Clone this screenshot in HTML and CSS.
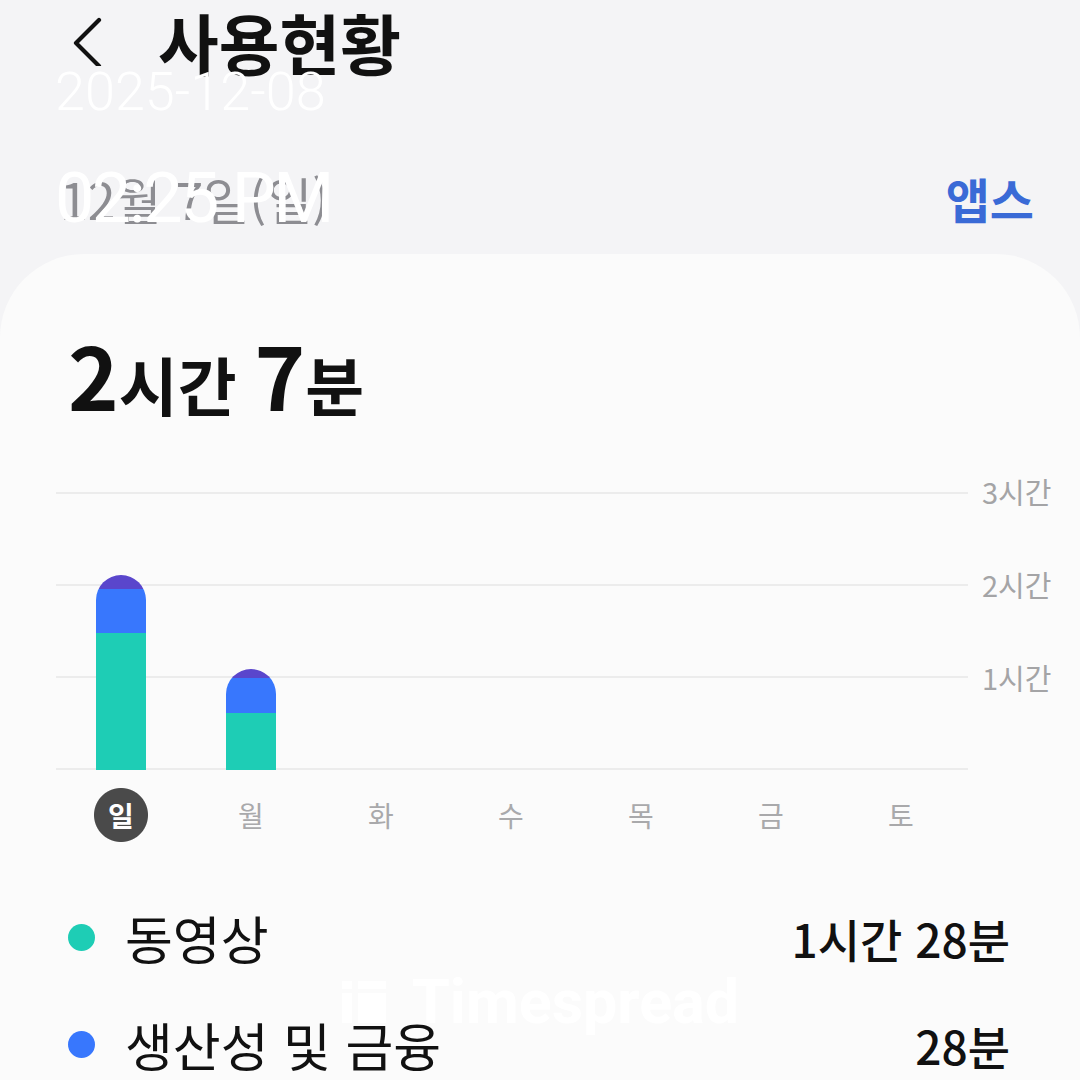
FILE: index.html
```html
<!DOCTYPE html>
<html lang="ko">
<head>
<meta charset="utf-8">
<title>사용현황</title>
<link rel="stylesheet" href="styles.css">
</head>
<body>
<div class="screen">
  <header class="topbar">
    <svg class="back" width="34" height="50" viewBox="0 0 34 50"><path d="M27 4 L4 27 L27 50" fill="none" stroke="#111" stroke-width="4.2" stroke-linecap="round" stroke-linejoin="round"/></svg>
    <h1 class="title">사용현황</h1>
  </header>
  <div class="daterow">
    <span class="date">12월 7일(일)</span>
    <span class="apps">앱스</span>
  </div>

  <section class="card">
    <div class="total"><span class="num">2</span>시간 <span class="num">7</span>분</div>

    <div class="chart">
      <div class="plot">
        <div class="grid">
          <div class="gline"></div>
          <div class="gline"></div>
          <div class="gline"></div>
        </div>
        <div class="bars">
          <div class="col">
            <div class="bar">
              <div class="seg purple" style="height:14px"></div>
              <div class="seg blue" style="height:44px"></div>
              <div class="seg teal" style="height:137px"></div>
            </div>
          </div>
          <div class="col">
            <div class="bar">
              <div class="seg purple" style="height:9px"></div>
              <div class="seg blue" style="height:35px"></div>
              <div class="seg teal" style="height:57px"></div>
            </div>
          </div>
          <div class="col"></div>
          <div class="col"></div>
          <div class="col"></div>
          <div class="col"></div>
          <div class="col"></div>
        </div>
      </div>
      <div class="axis">
        <span>3시간</span>
        <span>2시간</span>
        <span>1시간</span>
      </div>
    </div>

    <div class="days">
      <span class="day sel">일</span>
      <span class="day">월</span>
      <span class="day">화</span>
      <span class="day">수</span>
      <span class="day">목</span>
      <span class="day">금</span>
      <span class="day">토</span>
    </div>

    <ul class="legend">
      <li class="row"><span class="dot teal"></span><span class="name">동영상</span><span class="val">1시간 28분</span></li>
      <li class="row"><span class="dot blue"></span><span class="name">생산성 및 금융</span><span class="val">28분</span></li>
    </ul>
  </section>

  <div class="stamp">
    <div class="stamp-date">2025-12-08</div>
    <div class="stamp-time">02:25 PM</div>
  </div>

  <div class="watermark">
    <svg width="44" height="42" viewBox="0 0 44 42"><rect x="0" y="0" width="10" height="8" fill="#fff"/><rect x="0" y="12" width="10" height="30" fill="#fff"/><rect x="16" y="0" width="28" height="8" fill="#fff"/><rect x="16" y="12" width="28" height="30" fill="#fff"/></svg>
    <span>Timespread</span>
  </div>
</div>
</body>
</html>
```
FILE: styles.css
```css
* { box-sizing: border-box; }
html, body { margin: 0; padding: 0; }
body {
  background: #f4f4f6;
  font-family: "Noto Sans CJK KR", "Noto Sans", sans-serif;
  color: #111;
}
.screen {
  position: relative;
  width: 1080px;
  height: 1080px;
  overflow: hidden;
  background: #f4f4f6;
}
.topbar {
  height: 84px;
  display: flex;
  align-items: flex-start;
  padding: 4px 0 0 72px;
}
.back { display: block; margin-top: 12px; }
.title {
  margin: 0 0 0 52px;
  font-size: 66px;
  font-weight: 700;
  line-height: 74px;
}
.daterow {
  height: 170px;
  display: flex;
  align-items: center;
  justify-content: space-between;
  padding: 58px 46px 0 60px;
}
.date {
  font-size: 50px;
  color: #8d8d92;
  line-height: 1;
}
.apps {
  font-size: 48px;
  font-weight: 700;
  color: #3a6ad6;
  line-height: 1;
}
.card {
  background: #fbfbfb;
  border-radius: 84px 84px 0 0;
  height: 826px;
  padding-top: 70px;
}
.total {
  padding-left: 68px;
  font-size: 64px;
  font-weight: 700;
  line-height: 100px;
  height: 100px;
}
.total .num { font-size: 86px; }
.chart {
  margin-top: 68px;
  display: flex;
  padding-left: 56px;
}
.plot {
  width: 912px;
  height: 278px;
  display: grid;
}
.grid, .bars { grid-area: 1 / 1; }
.grid {
  display: flex;
  flex-direction: column;
  border-bottom: 2px solid #ececec;
}
.gline {
  flex: 1;
  border-top: 2px solid #ececec;
}
.bars {
  display: flex;
  align-items: flex-end;
}
.col {
  width: 130px;
  display: flex;
  justify-content: center;
  align-items: flex-end;
}
.bar {
  width: 50px;
  border-radius: 25px 25px 0 0;
  overflow: hidden;
  display: flex;
  flex-direction: column;
}
.seg.purple { background: #5a46cc; }
.seg.blue { background: #3877fd; }
.seg.teal { background: #1ecdb5; }
.axis {
  margin-left: 14px;
  margin-top: -19px;
  display: flex;
  flex-direction: column;
  gap: 56px;
}
.axis span {
  font-size: 29px;
  line-height: 37px;
  color: #a4a4a6;
}
.days {
  display: flex;
  padding-left: 56px;
  margin-top: 18px;
}
.day {
  width: 130px;
  height: 54px;
  display: flex;
  align-items: center;
  justify-content: center;
  font-size: 28px;
  color: #a9a9ab;
}
.day.sel {
  color: #fff;
  font-weight: 700;
  background: radial-gradient(circle at center, #4a4a4a 26.5px, transparent 27.5px);
}
.legend {
  list-style: none;
  margin: 42px 0 0 0;
  padding: 0 70px 0 68px;
}
.row {
  display: flex;
  align-items: center;
  height: 107px;
}
.dot {
  width: 27px;
  height: 27px;
  border-radius: 50%;
  margin-right: 30px;
}
.dot.teal { background: #1ecdb5; }
.dot.blue { background: #3877fd; }
.name {
  font-size: 52px;
  line-height: 1;
  flex: 1;
}
.val {
  font-size: 46px;
  font-weight: 500;
  line-height: 1;
}
.stamp {
  position: absolute;
  left: 55px;
  top: 64px;
  color: #fff;
  font-family: Roboto, "Liberation Sans", sans-serif;
}
.stamp-date {
  font-size: 54px;
  font-weight: 300;
  line-height: 56px;
}
.stamp-time {
  margin-top: 40px;
  font-size: 70px;
  font-weight: 400;
  letter-spacing: -2.5px;
  line-height: 76px;
}
.watermark {
  position: absolute;
  left: 342px;
  top: 972px;
  display: flex;
  align-items: center;
  gap: 26px;
  color: #fff;
  font-family: Roboto, "Liberation Sans", sans-serif;
  font-weight: 700;
  font-size: 61px;
  line-height: 60px;
}
.watermark svg { display: block; }
```
